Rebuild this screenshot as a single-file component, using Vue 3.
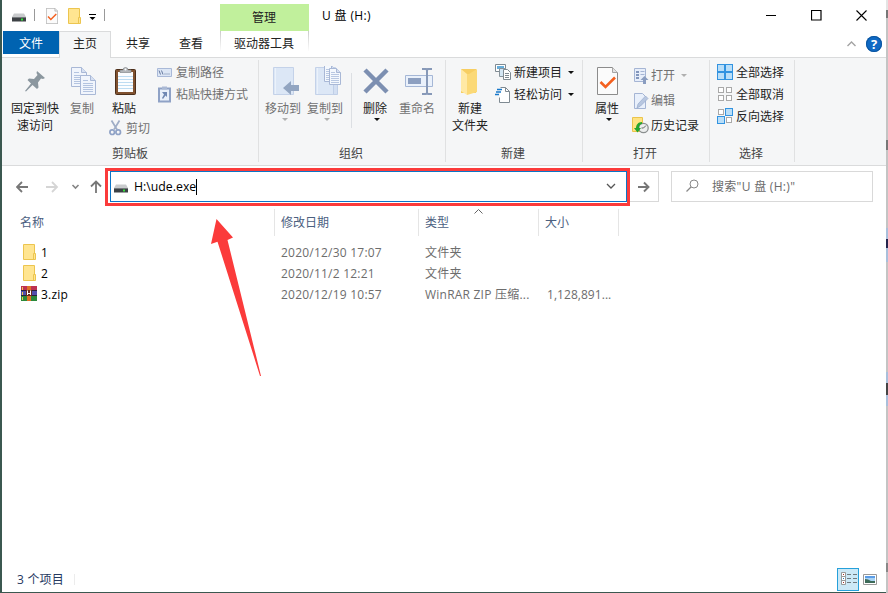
<template>
  <div class="desktop">
    <!-- shared icon shapes -->
    <svg class="defs" width="0" height="0">
      <symbol id="drive" viewBox="0 0 14 9">
        <path d="M2 0.5h10l2 3.5H0z" fill="#c9cbcd" />
        <path d="M0 4h14v4.5H0z" fill="#3d4145" />
        <path d="M0 4h14v1H0z" fill="#777b7e" />
        <rect x="9" y="5.5" width="2" height="2" fill="#35e03b" />
      </symbol>
      <symbol id="folder" viewBox="0 0 13 16">
        <path d="M.5.5h11v9h1v6H.5z" fill="#ffe591" stroke="#ecc54f" />
        <path d="M10.5 15V9.5h1.5" fill="none" stroke="#ecc54f" />
      </symbol>
      <symbol id="check-page" viewBox="0 0 21 28">
        <path d="M.5.5h15l5 5v22H.5z" fill="#fbfbfb" stroke="#8c8c8c" />
        <path d="M15.5.5v5h5" fill="#e3e3e3" stroke="#a5a5a5" />
        <path d="M3.500 15l5 5L18 10.500" fill="none" stroke="#f4601f" stroke-width="2.600" />
      </symbol>
      <symbol id="page" viewBox="0 0 16 20">
        <path d="M.5.5h10l5 5v14H.5z" fill="#f1f5fc" stroke="#a9b8d6" />
        <path d="M10.500.5v5h5" fill="#d6e0f2" stroke="#a9b8d6" />
        <path d="M3 5.500h5M3 8.500h10M3 10.500h10M3 12.500h10M3 14.500h10M3 16.500h10" stroke="#b4c4e0" />
      </symbol>
      <symbol id="page-small" viewBox="0 0 12 17">
        <path d="M.5.5h7l4 4v12H.5z" fill="#f4f8fd" stroke="#a9b8d6" />
        <path d="M7.500.5v4h4" fill="#d6e0f2" stroke="#a9b8d6" />
        <path d="M2 4.500h4M2 6.500h8M2 8.500h8M2 10.500h8M2 12.500h8M2 14.500h8" stroke="#b9c8e2" />
      </symbol>
      <symbol id="book" viewBox="0 0 23 28">
        <path d="M.5.5h20v27H.5z" fill="#dce7f6" stroke="#c4d2e9" />
        <path d="M2.500 1v26" stroke="#ebf2fb" />
        <path d="M18.500 27.500V14.500h4v13z" fill="#d3dff2" stroke="#c0cfe7" />
      </symbol>
    </svg>

    <div class="window">
      <header class="titlebar">
        <div class="quick">
          <svg width="14" height="9" class="q-drive"><use href="#drive" /></svg>
          <i class="tick"></i>
          <svg width="12" height="16" class="q-check"><use href="#check-page" /></svg>
          <svg width="13" height="16" class="q-folder"><use href="#folder" /></svg>
          <svg width="7" height="6" class="q-more"><path d="M0 .5h7" stroke="#000" /><path d="M0.500 3h6l-3 3z" /></svg>
          <i class="tick last"></i>
        </div>
        <div class="context-head">管理</div>
        <div class="title">U 盘 (H:)</div>
        <div class="controls">
          <svg width="11" height="11"><path d="M0 5.500h10" stroke="#000" /></svg>
          <svg width="11" height="11"><path d="M.5.5h9.500v9.500H.5z" fill="none" stroke="#000" stroke-width="1.200" /></svg>
          <svg width="11" height="11"><path d="M.5.5l10 10M10.500.5l-10 10" stroke="#000" stroke-width="1.100" /></svg>
        </div>
      </header>

      <nav class="tabs">
        <div class="tab file">文件</div>
        <div class="tab home">主页</div>
        <div class="tab share">共享</div>
        <div class="tab view">查看</div>
        <div class="tab context">驱动器工具</div>
        <div class="help">
          <svg width="9" height="6"><path d="M.5 5l4-4 4 4" fill="none" stroke="#a3a3a3" stroke-width="1.400" /></svg>
          <span class="help-badge">?</span>
        </div>
      </nav>

      <section class="ribbon">
        <div class="group clipboard">
          <div class="items">
            <div class="big pin">
              <svg width="21" height="32" viewBox="0 0 21 32">
                <path d="M12 5l8 7-2 1-2-.5-3 4 .5 5-1.500 1.500-4.500-4-6.500 6.500-1-.5L6 17.500 2.500 14l1.500-1.500 5 .5 3.500-4-1-2z" fill="#8b979f" />
              </svg>
              <span>固定到快<br />速访问</span>
            </div>
            <div class="big off copy">
              <svg width="25" height="32" viewBox="0 0 25 32">
                <use href="#page" x="0" y="1" width="16" height="20" />
                <use href="#page" x="9" y="9" width="16" height="20" />
              </svg>
              <span>复制</span>
            </div>
            <div class="paste-col">
              <div class="big paste">
                <svg width="21" height="32" viewBox="0 0 21 32">
                  <rect x=".5" y="3.500" width="20" height="25" rx="1" fill="#805230" stroke="#4c2f1b" />
                  <path d="M3 6h15v20H3z" fill="#fbfdff" />
                  <path d="M3 10.500h15M3 13.500h15M3 16.500h15M3 19.500h15M3 22.500h15" stroke="#bddcf2" />
                  <path d="M5 6.500h11V4h-3a2.500 2.500 0 0 0-5 0H5z" fill="#b4b7ba" stroke="#85898c" stroke-width=".7" />
                  <circle cx="10.500" cy="3.500" r="1" fill="#fff" />
                </svg>
                <span>粘贴</span>
              </div>
              <div class="small off cut">
                <svg width="13" height="16" viewBox="0 0 13 16">
                  <path d="M2.500.5l5.500 9M10.500.5L5 9.500" stroke="#9fadc6" stroke-width="1.700" />
                  <circle cx="3.200" cy="12.200" r="2.300" fill="none" stroke="#8fa2c6" stroke-width="1.700" />
                  <circle cx="9.200" cy="12.200" r="2.300" fill="none" stroke="#8fa2c6" stroke-width="1.700" />
                </svg>剪切
              </div>
            </div>
            <div class="small-col clip-col">
              <div class="small off">
                <svg width="15" height="9"><path d="M.5.5h14v8H.5z" fill="#dce6f5" stroke="#a9b9d8" /><path d="M2 2.500l1.500 4M4.500 2.500l1.500 4M7.500 6h1M9.500 6h1M11.500 6h1" stroke="#64789f" /></svg>复制路径
              </div>
              <div class="small off">
                <svg width="15" height="17" viewBox="0 0 15 17"><path d="M2 2.500h11v13H2z" fill="#e9f0fa" stroke="#8fa2c6" stroke-width="2" /><path d="M5 .5h5v3H5z" fill="#aab9d4" /><path d="M5 6h5v5L8.500 9.500 6 13l-1-1 2-3.500z" fill="#7088b3" /></svg>粘贴快捷方式
              </div>
            </div>
          </div>
          <div class="label">剪贴板</div>
        </div>

        <div class="group organize">
          <div class="items">
            <div class="big off move">
              <svg width="27" height="32" viewBox="0 0 27 32">
                <path d="M.5 1.500h20v27H.5z" fill="#dce7f6" stroke="#c4d2e9" />
                <path d="M2.500 2v26" stroke="#ebf2fb" />
                <path d="M10 22l8-7v4h8v6h-8v4z" fill="#92a5c1" />
              </svg>
              <span>移动到</span>
              <b class="caret"></b>
            </div>
            <div class="big off copyto">
              <svg width="27" height="32" viewBox="0 0 27 32">
                <use href="#book" x="0" y="1" width="23" height="28" />
                <use href="#page-small" x="9" y="-1" width="12" height="17" />
                <use href="#page-small" x="14" y="2" width="12" height="17" />
              </svg>
              <span>复制到</span>
              <b class="caret"></b>
            </div>
            <i class="divider"></i>
            <div class="big delete">
              <svg width="26" height="32" viewBox="0 0 26 32"><path d="M2 4l22 22M24 4L2 26" stroke="#7c8fb1" stroke-width="4.500" /></svg>
              <span>删除</span>
              <b class="caret"></b>
            </div>
            <div class="big off rename">
              <svg width="28" height="32" viewBox="0 0 28 32">
                <path d="M.5 9.500h27v11H.5z" fill="#eaf1fb" stroke="#a5b7d6" />
                <path d="M3 12h13v6H3z" fill="#8c9fc0" />
                <path d="M17 3h4l1 1 1-1h4M22 4v23M17 28h4l1-1 1 1h4" fill="none" stroke="#8799b8" stroke-width="2" />
              </svg>
              <span>重命名</span>
            </div>
          </div>
          <div class="label">组织</div>
        </div>

        <div class="group create">
          <div class="items">
            <div class="big newfolder">
              <svg width="20" height="32" viewBox="0 0 20 32">
                <path d="M1 3h15v24H1z" fill="#f7ce62" />
                <path d="M6 8h3l8-5v23l-10 3z" fill="#fbd977" />
                <path d="M1 3l6 5v21l-6-4z" fill="#ffe9a5" />
              </svg>
              <span>新建<br />文件夹</span>
            </div>
            <div class="small-col new-col">
              <div class="small">
                <svg width="17" height="16" viewBox="0 0 17 16"><path d="M.5.5h10v7H.5z" fill="#fff" stroke="#7f8a92" /><path d="M2 2h7v3H2z" fill="#65acd9" /><path d="M4.500 4.500h6v8h-6z" fill="#d4e7f5" stroke="#87939b" /><path d="M8.500 5.500h4l3 3v7h-7z" fill="#fff" stroke="#7f8a92" /><path d="M10 9.500h4M10 11.500h4M10 13.500h4" stroke="#7f8a92" /></svg>新建项目<b class="caret"></b>
              </div>
              <div class="small">
                <svg width="17" height="17" viewBox="0 0 17 17"><path d="M5.500 1.500h5l4 4v11h-10v-5" fill="#fff" stroke="#7f8a92" /><path d="M10.500 1.500v4h4" fill="none" stroke="#7f8a92" /><path d="M2 3.500h5M1 6h5M0 8.500h4" stroke="#1979ca" stroke-width="1.300" /></svg>轻松访问<b class="caret"></b>
              </div>
            </div>
          </div>
          <div class="label">新建</div>
        </div>

        <div class="group open">
          <div class="items">
            <div class="big props">
              <svg width="21" height="32" viewBox="0 0 21 32"><use href="#check-page" y="1" width="21" height="28" /></svg>
              <span>属性</span>
              <b class="caret"></b>
            </div>
            <div class="small-col open-col">
              <div class="small off">
                <svg width="17" height="16" viewBox="0 0 17 16"><path d="M2.500.5h11v13h-11z" fill="#e7eefa" stroke="#a5b5d4" /><path d="M4 3h3v2H4zM4 6h3v2H4zM4 9h3v2H4z" fill="#8397bd" /><path d="M8.500 3.500h4M8.500 6.500h4" stroke="#a5b5d4" /><path d="M11 16v-4H8.500L12.500 8l4 4H14v4z" fill="#8a9dc0" /></svg>打开<b class="caret"></b>
              </div>
              <div class="small off">
                <svg width="17" height="16" viewBox="0 0 17 16"><path d="M2.500.5h8l3 3v12h-11z" fill="#e9f0fb" stroke="#a5b5d4" /><path d="M5 15l1-4 7.500-8 2.500 2.500L8.500 13z" fill="#b8c7e0" stroke="#97aacb" stroke-width=".7" /></svg>编辑
              </div>
              <div class="small">
                <svg width="17" height="17" viewBox="0 0 17 17"><path d="M.5.5h10v14H.5z" fill="#ffe382" stroke="#ebc44c" /><circle cx="11.500" cy="11" r="4.700" fill="#eceeee" stroke="#8b9090" stroke-width="1.300" /><path d="M11.500 11l2.500-2.500M11.500 11h-2" stroke="#666" /><path d="M10 5C6 5 4 8 4 11H2l3.500 4.500L9 11H7c0-2 1-4 3-4z" fill="#25a62e" /></svg>历史记录
              </div>
            </div>
          </div>
          <div class="label">打开</div>
        </div>

        <div class="group select">
          <div class="items">
            <div class="small-col select-col">
              <div v-for="s in selectActions" :key="s.text" class="small">
                <svg width="16" height="16">
                  <rect v-for="(on, i) in s.cells" :key="i"
                    :x="(i % 2) * 8 + (on ? 0.5 : 1.5)" :y="Math.floor(i / 2) * 8 + (on ? 0.5 : 1.5)"
                    :width="on ? 7 : 5" :height="on ? 7 : 5"
                    :fill="on ? '#b9def8' : '#fff'" :stroke="on ? '#3293e0' : '#a9a9a9'" />
                </svg>{{ s.text }}
              </div>
            </div>
          </div>
          <div class="label">选择</div>
        </div>
      </section>

      <section class="address-row">
        <svg class="nav-icons" width="88" height="14" viewBox="0 0 88 14">
          <path d="M12 7H1M6 2L1 7l5 5" fill="none" stroke="#777" stroke-width="1.800" />
          <path d="M30 7h11M36 2l5 5-5 5" fill="none" stroke="#d5d5d5" stroke-width="1.800" />
          <path d="M56.500 5l3 3 3-3" fill="none" stroke="#858585" stroke-width="1.600" />
          <path d="M80 13V1.500M75 6.500l5-5 5 5" fill="none" stroke="#777" stroke-width="1.800" />
        </svg>
        <div class="address">
          <svg width="14" height="9"><use href="#drive" /></svg>
          <span class="path">{{ path }}</span><i class="cursor"></i>
          <svg class="drop" width="10" height="7"><path d="M1 1l4 4 4-4" fill="none" stroke="#555" stroke-width="1.300" /></svg>
          <div class="highlight"></div>
        </div>
        <div class="go">
          <svg width="12" height="12"><path d="M0 6h10.500M6 1.500L10.500 6 6 10.500" fill="none" stroke="#777" stroke-width="1.900" /></svg>
        </div>
        <div class="search">
          <svg width="13" height="13"><circle cx="8" cy="5" r="4" fill="none" stroke="#888" /><path d="M5 8L.5 12.500" stroke="#888" stroke-width="1.200" /></svg>
          <span>搜索"U 盘 (H:)"</span>
        </div>
      </section>

      <main class="files">
        <div class="columns">
          <span class="col name">名称</span>
          <span class="col date">修改日期</span>
          <span class="col type">类型
            <svg class="sort" width="9" height="5"><path d="M.5 4.500l4-4 4 4" fill="none" stroke="#666" /></svg>
          </span>
          <span class="col size">大小</span>
        </div>
        <div v-for="f in files" :key="f.name" class="row">
          <div class="cell name">
            <svg v-if="f.kind === 'folder'" class="f-icon" width="13" height="16"><use href="#folder" /></svg>
            <svg v-else class="f-icon zip" width="16" height="15" viewBox="0 0 16 15">
              <path d="M0 0h16v5H0z" fill="#bd3152" />
              <path d="M0 5h16v5H0z" fill="#514fae" />
              <path d="M0 10h16v5H0z" fill="#2b8a3b" />
              <path d="M0 4.500h16M0 9.500h16" stroke="#28233c" />
              <path d="M1.500 1v3M1.500 6v3M1.500 11v3" stroke="#f1c94e" />
              <path d="M6 0h4v15H6z" fill="#df7127" />
              <path d="M5 4h6v6H5z" fill="#6a2c20" />
              <path d="M6.500 4.500V9M9.500 4.500V9M6.500 7.500h3" stroke="#fff" />
            </svg>
            {{ f.name }}
          </div>
          <div class="cell date">{{ f.date }}</div>
          <div class="cell type">{{ f.type }}</div>
          <div class="cell size">{{ f.size }}</div>
        </div>
      </main>

      <footer class="status">
        <span class="count">{{ files.length }} 个项目</span>
        <i class="status-sep"></i>
        <div class="view-btn active">
          <svg width="17" height="14" viewBox="0 0 17 14"><path d="M.5.5h4v4h-4zM.5 4.500h4v4h-4zM.5 8.500h4v4h-4z" fill="#fff" stroke="#999" /><path d="M2 2h1v1H2zM2 10h1v1H2z" fill="#a4302a" /><path d="M2 6h1v1H2z" fill="#2c76b8" /><path d="M6 2.500h4M12 2.500h4M6 6.500h4M12 6.500h4M6 10.500h4M12 10.500h4" stroke="#6e7a80" /></svg>
        </div>
        <svg class="thumbs" width="14" height="11" viewBox="0 0 14 11"><path d="M.5.5h13v10H.5z" fill="#fff" stroke="#999" /><path d="M2 2h10v7H2z" fill="#a9d3f5" /><path d="M2 2h10v2H2z" fill="#5b9ce6" /><path d="M2 5l3 .5 3 1.500h4v2H2z" fill="#3c6a58" /></svg>
      </footer>
    </div>
    <div class="edge"></div>

    <svg class="pointer" width="60" height="170" viewBox="0 0 60 170">
      <path d="M11.500 9L28 27.500 22.500 30 56 166h-1L12.500 31.700 6 34z" fill="#fb3b3b" />
    </svg>
  </div>
</template>

<script setup>
import { ref } from 'vue'

const path = ref('H:\\ude.exe')

const files = ref([
  { name: '1', kind: 'folder', date: '2020/12/30 17:07', type: '文件夹', size: '' },
  { name: '2', kind: 'folder', date: '2020/11/2 12:21', type: '文件夹', size: '' },
  { name: '3.zip', kind: 'zip', date: '2020/12/19 10:57', type: 'WinRAR ZIP 压缩...', size: '1,128,891...' }
])

const selectActions = [
  { text: '全部选择', cells: [true, true, true, true] },
  { text: '全部取消', cells: [false, false, false, false] },
  { text: '反向选择', cells: [false, true, true, false] }
]
</script>

<style>
body {
  overflow: hidden;
}
</style>

<style scoped>
.desktop {
  position: relative;
  width: 888px;
  height: 593px;
  display: flex;
  box-sizing: border-box;
  padding-left: 2px;
  background: #3b5850;
  font-family: "Open Sans", "Noto Sans CJK SC", sans-serif;
  font-size: 12px;
  line-height: 17px;
  color: #222;
  white-space: nowrap;
}
.desktop * { box-sizing: border-box; }
.defs { position: absolute; }
svg { display: block; flex: none; }

.window {
  width: 884px;
  height: 592px;
  background: #fff;
  display: flex;
  flex-direction: column;
}
.edge {
  width: 2px;
  height: 593px;
  background: linear-gradient(#e4e4e4 0 10px, #777 10px 18px, #c4c4c4 18px 140px, #777 140px 150px, #c4c4c4 150px 228px, #a9bfdb 228px 239px, #25254d 239px 248px, #a9bfdb 248px 262px, #c4c4c4 262px 372px, #a9bfdb 372px 383px, #444 383px 395px, #a9bfdb 395px 406px, #c4c4c4 406px 563px, #888 563px 572px, #c4c4c4 572px);
}

/* title bar */
.titlebar { height: 31px; display: flex; flex: none; }
.quick { width: 218px; display: flex; padding-left: 10px; align-items: flex-start; }
.q-drive { margin-top: 13px; }
.tick { width: 1px; height: 12px; background: #999; margin: 9px 0 0 8px; }
.q-check { margin: 8px 0 0 11px; }
.q-folder { margin: 8px 0 0 10px; }
.q-more { margin: 14px 0 0 8px; }
.tick.last { margin-left: 8px; }
.context-head {
  width: 89px;
  margin-top: 4px;
  padding-right: 1px;
  background: #c1f09c;
  text-align: center;
  line-height: 27px;
}
.title { margin-left: 13px; line-height: 31px; color: #000; letter-spacing: 0.350px; }
.controls { margin: 10px 19px 0 auto; display: flex; gap: 34px; }

/* tabs */
.tabs { height: 27px; display: flex; flex: none; border-bottom: 1px solid #dadbdc; }
.tab { line-height: 25px; height: 27px; text-align: center; }
.file { width: 56px; height: 23px; margin-left: 1px; background: #0063b1; color: #fff; }
.home { width: 52px; background: #f5f6f7; border: 1px solid #dadbdc; border-bottom: 0; line-height: 23px; }
.share { width: 54px; }
.view { width: 52px; }
.context {
  width: 89px;
  height: 20px;
  margin-left: 3px;
  padding-right: 1px;
  border: 1px solid;
  border-width: 0 1px;
  border-image: linear-gradient(#c8c8c8, #fff) 1;
}
.help { margin: 4px 4px 0 auto; display: flex; align-items: center; gap: 10px; height: 17px; }
.help-badge {
  width: 16px;
  height: 16px;
  border-radius: 50%;
  background: #0f69c4;
  box-shadow: inset 0 0 0 1px #0b559f;
  color: #fff;
  font-weight: 700;
  font-size: 13px;
  line-height: 16px;
  text-align: center;
}

/* ribbon */
.ribbon {
  height: 108px;
  flex: none;
  display: flex;
  background: #f5f6f7;
  border-bottom: 1px solid #dadbdc;
}
.group {
  height: 102px;
  margin-top: 2px;
  border-right: 1px solid #e0e1e2;
  display: flex;
  flex-direction: column;
}
.clipboard { width: 257px; }
.organize { width: 187px; }
.create { width: 137px; }
.open { width: 127px; }
.select { width: 85px; }
.items { display: flex; align-items: flex-start; height: 85px; }
.label { text-align: center; color: #444; line-height: 17px; padding-right: 2px; }
.clipboard .label { padding-right: 0; }
.big {
  display: flex;
  flex-direction: column;
  align-items: center;
  text-align: center;
  padding-top: 6px;
}
.big span { margin-top: 2px; }
.big .caret { margin-top: 1px; }
.off { color: #717171; }
.caret {
  border: 3px solid transparent;
  border-top-color: #111;
  border-bottom: 0;
}
.off .caret { border-top-color: #b0b0b0; }
.small { display: flex; align-items: center; height: 22px; }
.small svg { margin-right: 4px; }
.small .caret { margin-left: 6px; }

.pin { width: 50px; margin-left: 8px; }
.copy { width: 42px; margin-left: 1px; }
.copy svg { margin-left: 2px; }
.paste-col { width: 50px; }
.paste { width: 42px; }
.paste svg { margin-left: 2px; }
.cut { margin-left: 6px; }
.cut svg { margin-right: 4px; }
.clip-col { margin: 1px 0 0 4px; }

.move { width: 42px; margin-left: 3px; }
.move svg, .copyto svg { margin-left: 6px; }
.copyto { width: 42px; }
.divider { width: 1px; height: 55px; margin: 13px 0 0 5px; background: #dcdfe3; }
.delete { width: 40px; margin-left: 3px; }
.delete svg { margin-left: 2px; }
.rename { width: 40px; margin-left: 2px; }
.rename svg { margin-left: 3px; }
.delete .caret { margin-left: 4px; }
.move .caret, .copyto .caret { margin-left: 4px; }

.newfolder { width: 42px; margin-left: 3px; }
.new-col { margin: 1px 0 0 4px; }
.new-col .small svg { margin-right: 2px; }

.props { width: 42px; margin-left: 3px; }
.props svg { margin-left: 1px; }
.props .caret { margin-left: 4px; }
.open-col { margin: 3px 0 0 4px; }
.open-col .small { height: 25px; }
.open-col .small svg { margin-right: 2px; }

.select-col { margin: 1px 0 0 7px; }
.select-col .small svg { margin-right: 3px; }

/* address bar */
.address-row { height: 40px; flex: none; display: flex; padding-top: 5px; }
.nav-icons { margin: 9px 6px 0 14px; }
.address {
  position: relative;
  width: 517px;
  height: 31px;
  border: 1px solid #0b74c7;
  display: flex;
  align-items: center;
  padding: 0 10px 0 3px;
  color: #000;
}
.address svg:first-child { margin-top: 4px; }
.path { margin-left: 6px; font-size: 12.300px; }
.cursor { width: 1px; height: 16px; background: #000; }
.drop { margin-left: auto; }
.highlight {
  position: absolute;
  left: -6px;
  top: -4px;
  width: 525px;
  height: 38px;
  border: 3px solid #fb3b3b;
}
.go {
  width: 32px;
  height: 31px;
  border: 1px solid #d9d9d9;
  border-left: 0;
  display: flex;
  align-items: center;
  padding-left: 11px;
}
.search {
  width: 202px;
  height: 31px;
  margin-left: 12px;
  border: 1px solid #d9d9d9;
  display: flex;
  align-items: center;
  padding-left: 14px;
  color: #6b6b6b;
}
.search svg { margin-top: -2px; }
.search span { margin-left: 13px; letter-spacing: 0.300px; }

/* file list */
.files { flex: 1; padding-top: 3px; }
.columns { display: flex; height: 33px; color: #4b607f; }
.col { position: relative; height: 27px; line-height: 27px; border-right: 1px solid #e5e5e5; padding-left: 6px; }
.row { display: flex; height: 21px; line-height: 21px; color: #6d6d6d; }
.cell { padding-left: 6px; display: flex; align-items: center; letter-spacing: 0.220px; }
.name { width: 273px; }
.date { width: 144px; }
.type { width: 120px; }
.size { width: 80px; }
.col.name { padding-left: 18px; }
.cell.name { padding-left: 21px; color: #000; }
.cell.size { padding-left: 8px; letter-spacing: 0.050px; }
.f-icon { margin: -2px 5px 0 0; }
.f-icon.zip { margin: -2px 4px 0 -2px; }
.sort { position: absolute; left: 55px; top: 0; }

/* status bar */
.status { height: 26px; flex: none; display: flex; align-items: center; padding-left: 15px; color: #26395f; }
.count { letter-spacing: 0.200px; }
.status-sep { width: 1px; height: 11px; margin-left: 10px; background: #ececec; }
.view-btn {
  width: 22px;
  height: 23px;
  margin-left: auto;
  border: 1px solid #26a0da;
  background: #cce8f6;
  display: flex;
  align-items: center;
  justify-content: center;
}
.view-btn svg { margin-left: 2px; }
.thumbs { margin: 0 9px 0 4px; }

.pointer { position: absolute; left: 205px; top: 210px; }
</style>
